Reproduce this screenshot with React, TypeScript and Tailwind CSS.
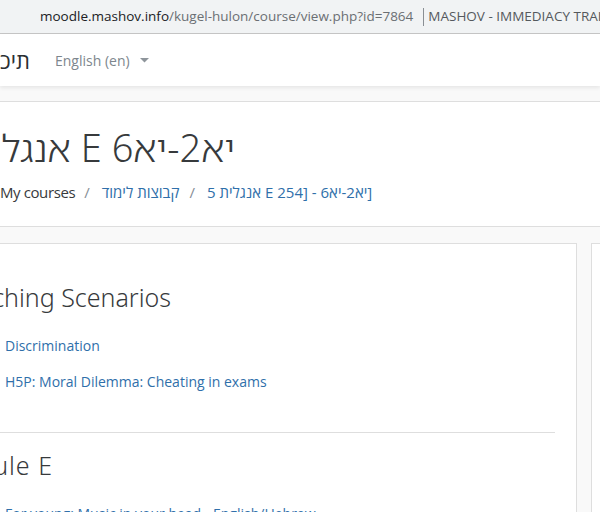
const sans = "font-['Open_Sans','Liberation_Sans',sans-serif]"
const light = "font-['Noto_Sans','Noto_Sans_Hebrew','Open_Sans',sans-serif] font-light"

function Caret() {
  return (
    <svg width="9" height="5" viewBox="0 0 9 5" className="ml-[10px]">
      <path d="M0 0 L4.5 4.5 L9 0 Z" fill="#8e959b" />
    </svg>
  )
}

export default function App() {
  return (
    <div className={`w-[600px] h-[512px] overflow-hidden bg-[#f9f9f9] ${sans}`}>
      {/* browser address bar */}
      <div className="h-[34px] bg-[#f1f3f4] border-b border-[#c6c6c6] flex items-center pl-[40px] text-[13.5px] whitespace-nowrap">
        <span className="text-[#202124]">moodle.mashov.info</span>
        <span className="text-[#6b6f73]">/kugel-hulon/course/view.php?id=7864</span>
        <span className="ml-[10px] mr-[4px] h-[18px] border-l border-[#8a8f94]" />
        <span className="text-[#55595d]">MASHOV - IMMEDIACY TRAINING</span>
      </div>

      {/* navbar */}
      <nav className="h-[52px] bg-white shadow-[0_2px_4px_rgba(0,0,0,0.08)] flex items-center">
        <div className="w-[30px] flex justify-end whitespace-nowrap text-[22px] text-[#2b2f33]">
          תיכון קוגל חולון
        </div>
        <button type="button" className="ml-[25px] flex items-center text-[14px] text-[#7d868d]">
          English (en)
          <Caret />
        </button>
      </nav>

      <div className="h-[15px]" />

      {/* page header */}
      <header className="bg-white border-y border-[#dedede] -mx-[30px] px-[30px] pt-[23px] pb-[23px]">
        <div className={`w-[235px] flex justify-end whitespace-nowrap text-[38px] leading-[44px] text-[#373a3c] ${light}`}>
          אנגלית 5 E יא2-יא6
        </div>
        <nav className="mt-[12px] flex items-center whitespace-nowrap text-[15px] leading-[22px]">
          <span className="text-[#373a3c] tracking-[-0.4px]">My courses</span>
          <span className="ml-[9px] mr-[12px] text-[#868e96]">/</span>
          <a className="text-[#2f6faa]">קבוצות לימוד</a>
          <span className="ml-[10px] mr-[12px] text-[#868e96]">/</span>
          <a className="text-[#2f6faa]">אנגלית 5 E 254] - יא2-יא6]</a>
        </nav>
      </header>

      <div className="h-[16px]" />

      {/* content */}
      <div className="flex gap-[14px]">
        <main className="-ml-[20px] w-[597px] shrink-0 bg-white border border-[#dedede] pl-[24px] pr-[21px] h-[400px]">
          <section className="pt-[37px]">
            <div className={`w-[166px] flex justify-end whitespace-nowrap text-[25px] leading-[32px] text-[#373a3c] ${light}`}>
              Teaching Scenarios
            </div>
            <ul className="mt-[21px] flex flex-col gap-[12px] text-[14px] leading-[24px] text-[#2f6faa]">
              <li><a>Discrimination</a></li>
              <li><a>H5P: Moral Dilemma: Cheating in exams</a></li>
            </ul>
          </section>
          <hr className="mt-[38px] -ml-[24px] border-t border-[#dedede]" />
          <section className="pt-[16px]">
            <div className={`w-[48px] flex justify-end whitespace-nowrap text-[25px] leading-[32px] tracking-[1px] text-[#373a3c] ${light}`}>
              Module E
            </div>
            <ul className="mt-[21px] text-[14px] leading-[24px] text-[#2f6faa]">
              <li className="whitespace-nowrap"><a>For young: Music in your head - English/Hebrew</a></li>
            </ul>
          </section>
        </main>
        <aside className="w-[200px] shrink-0 bg-white border-l border-t border-[#dedede] h-[400px]" />
      </div>
    </div>
  )
}
